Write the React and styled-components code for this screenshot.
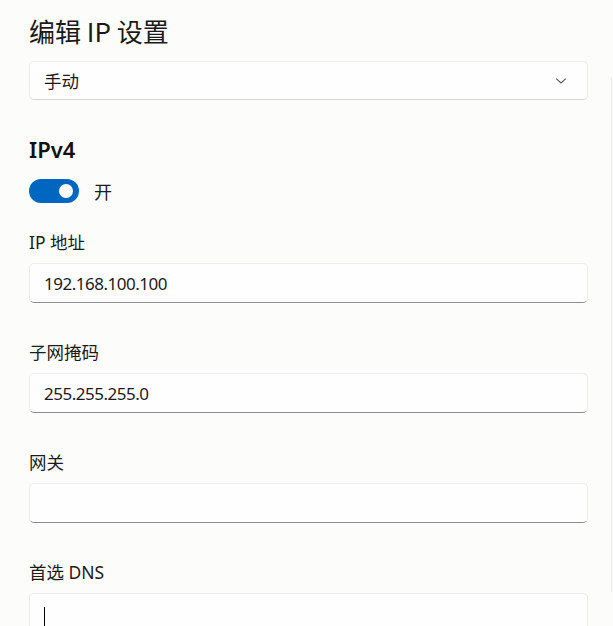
import React from "react";
import styled, { createGlobalStyle } from "styled-components";

const GlobalStyle = createGlobalStyle`
  html, body {
    margin: 0;
    padding: 0;
    background: #fcfcfb;
  }
  body {
    font-family: "Noto Sans", "Noto Sans CJK SC", sans-serif;
    color: #1b1b1b;
  }
`;

const Page = styled.div`
  position: relative;
  box-sizing: border-box;
  width: 613px;
  height: 626px;
  overflow: hidden;
  padding: 15px 25px 0 29px;
  background: #fcfcfb;
`;

const Title = styled.h1`
  margin: 0;
  font-family: "Noto Sans CJK SC", sans-serif;
  font-size: 26px;
  font-weight: 400;
  line-height: 32px;
  color: #1a1a1a;
`;

const Select = styled.div`
  box-sizing: border-box;
  margin-top: 14px;
  height: 39px;
  display: flex;
  align-items: center;
  justify-content: space-between;
  padding: 0 20px 0 14px;
  background: #fefefe;
  border: 1px solid #ebebeb;
  border-bottom-color: #d6d6d6;
  border-radius: 5px;
  font-family: "Noto Sans CJK SC", sans-serif;
  font-size: 17.5px;
  color: #1b1b1b;
`;

const SectionTitle = styled.h2`
  margin: 34px 0 0;
  font-family: "Noto Sans", sans-serif;
  font-size: 22px;
  font-weight: 600;
  line-height: 30px;
  color: #111;
`;

const ToggleRow = styled.div`
  margin-top: 14px;
  display: flex;
  align-items: center;
  gap: 15px;
  font-family: "Noto Sans CJK SC", sans-serif;
  font-size: 18px;
  color: #1b1b1b;
`;

const Toggle = styled.span`
  position: relative;
  display: inline-block;
  width: 50px;
  height: 24px;
  border-radius: 12px;
  background: ${({ on }) => (on ? "#0067c0" : "transparent")};

  &::after {
    content: "";
    position: absolute;
    top: 5px;
    ${({ on }) => (on ? "right: 6px;" : "left: 6px;")}
    width: 14px;
    height: 14px;
    border-radius: 50%;
    background: #fff;
  }
`;

const FieldList = styled.div`
  margin-top: 26px;
  display: flex;
  flex-direction: column;
  gap: 37px;
`;

const Field = styled.div`
  display: flex;
  flex-direction: column;
  gap: 9px;
`;

const Label = styled.div`
  font-family: "Noto Sans", "Noto Sans CJK SC", sans-serif;
  font-size: 17.5px;
  line-height: 24px;
  color: #1b1b1b;
`;

const TextBox = styled.div`
  box-sizing: border-box;
  height: 40px;
  display: flex;
  align-items: center;
  padding: 0 14px;
  background: #fefefe;
  border: 1px solid #ececec;
  border-bottom: 1px solid #8d8d8d;
  border-radius: 5px;
  font-family: "Noto Sans", sans-serif;
  font-size: 17px;
  letter-spacing: -0.5px;
  color: #1b1b1b;
`;

const Caret = styled.span`
  align-self: flex-end;
  display: inline-block;
  width: 1px;
  height: 23px;
  margin-bottom: 2px;
  background: #000;
`;

const ScrollTrack = styled.div`
  position: absolute;
  top: 78px;
  right: 1px;
  width: 1px;
  height: 514px;
  background: #e9e9e9;
`;

const Chevron = () => (
  <svg width="12" height="8" viewBox="0 0 12 8">
    <path d="M1.5 1.8 L6 6 L10.5 1.8" fill="none" stroke="#5c5c5c" strokeWidth="1.1" strokeLinecap="round" strokeLinejoin="round" />
  </svg>
);

const fields = [
  { label: "IP 地址", value: "192.168.100.100" },
  { label: "子网掩码", value: "255.255.255.0" },
  { label: "网关", value: "" },
  { label: "首选 DNS", value: "", focused: true },
];

export default function App() {
  return (
    <>
      <GlobalStyle />
      <Page>
        <Title>编辑 IP 设置</Title>
        <Select>
          <span>手动</span>
          <Chevron />
        </Select>

        <SectionTitle>IPv4</SectionTitle>
        <ToggleRow>
          <Toggle on />
          <span>开</span>
        </ToggleRow>

        <FieldList>
          {fields.map((f) => (
            <Field key={f.label}>
              <Label>{f.label}</Label>
              <TextBox>
                {f.value}
                {f.focused && <Caret />}
              </TextBox>
            </Field>
          ))}
        </FieldList>
        <ScrollTrack />
      </Page>
    </>
  );
}
